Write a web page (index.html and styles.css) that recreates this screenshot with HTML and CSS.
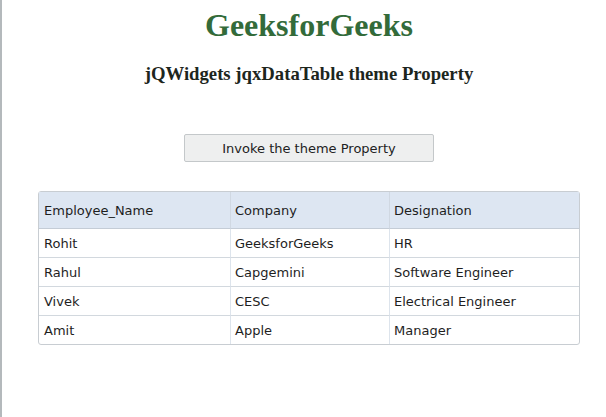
FILE: index.html
```html
<!DOCTYPE html>
<html>
<head>
<meta charset="utf-8">
<link rel="stylesheet" href="styles.css">
</head>
<body>
<div class="page">
  <h1 class="title">GeeksforGeeks</h1>
  <h3 class="subtitle">jQWidgets jqxDataTable theme Property</h3>
  <div class="actions">
    <button class="btn">Invoke the theme Property</button>
  </div>
  <table class="grid">
    <thead>
      <tr><th class="c1">Employee_Name</th><th class="c2">Company</th><th class="c3">Designation</th></tr>
    </thead>
    <tbody>
      <tr><td>Rohit</td><td>GeeksforGeeks</td><td>HR</td></tr>
      <tr><td>Rahul</td><td>Capgemini</td><td>Software Engineer</td></tr>
      <tr><td>Vivek</td><td>CESC</td><td>Electrical Engineer</td></tr>
      <tr><td>Amit</td><td>Apple</td><td>Manager</td></tr>
    </tbody>
  </table>
</div>
</body>
</html>
```
FILE: styles.css
```css
html, body {
  margin: 0;
  padding: 0;
  background: #fff;
}
body {
  border-left: 2px solid #b4b9bc;
  min-height: 417px;
  box-sizing: border-box;
}
.page {
  padding-left: 10px;
  display: flex;
  flex-direction: column;
  align-items: center;
}
.title {
  font-family: "Liberation Serif", serif;
  font-size: 32px;
  font-weight: bold;
  color: #336b3a;
  margin: 7px 0 0 0;
  line-height: 37px;
}
.subtitle {
  font-family: "Liberation Serif", serif;
  font-size: 18.72px;
  font-weight: bold;
  color: #1d261d;
  margin: 19px 0 0 0;
  line-height: 22px;
}
.actions {
  margin-top: 49px;
}
.btn {
  width: 250px;
  height: 28px;
  background: #eeefef;
  border: 1px solid #c4c8ca;
  border-radius: 2px;
  font-family: "DejaVu Sans", Verdana, sans-serif;
  font-size: 13px;
  color: #222;
  padding: 0;
  display: block;
}
.grid {
  margin-top: 29px;
  width: 542px;
  border-collapse: separate;
  border-spacing: 0;
  border: 1px solid #c8cdd2;
  border-radius: 3px;
  font-family: "DejaVu Sans", Verdana, sans-serif;
  font-size: 13px;
  color: #1e1e1e;
}
.grid th {
  background: #dde6f2;
  font-weight: normal;
  text-align: left;
  height: 36px;
  padding: 0 0 0 4px;
  border-left: 1px solid #d0d8e2;
  border-bottom: 1px solid #c4ccd6;
}
.grid td {
  height: 28px;
  padding: 0 0 0 4px;
  border-left: 1px solid #dde4ec;
  border-top: 1px solid #d2d8de;
}
.grid tbody tr:first-child td {
  border-top: none;
}
.grid th:first-child, .grid td:first-child {
  border-left: none;
  padding-left: 5px;
}
.c1 { width: 186px; }
.c2 { width: 154px; }
```
